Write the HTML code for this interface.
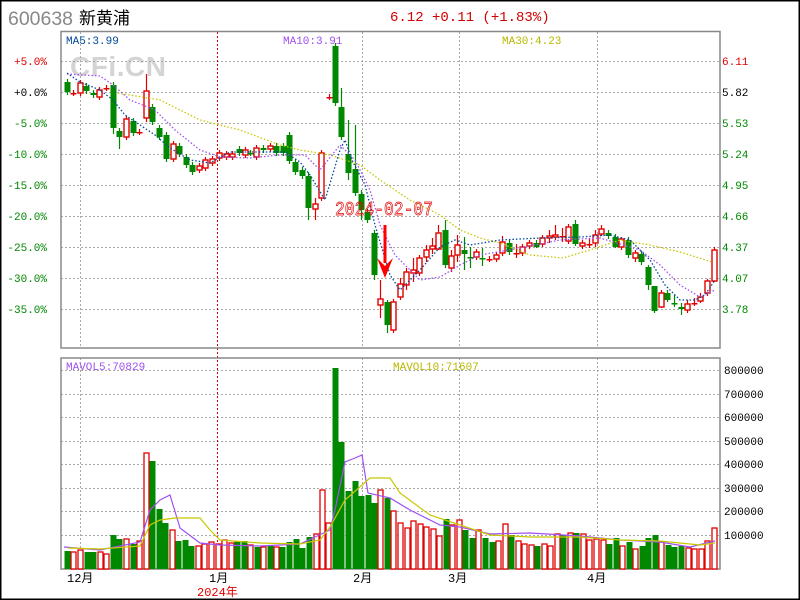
<!DOCTYPE html>
<html><head><meta charset="utf-8"><style>
html,body{margin:0;padding:0;background:#fff;}
#c{position:relative;width:800px;height:600px;overflow:hidden;}
svg text{font-family:"Liberation Mono","DejaVu Sans Mono",monospace;}
</style></head><body><div id="c">
<svg id="s" width="800" height="600" xmlns="http://www.w3.org/2000/svg">
<rect x="0.5" y="0.5" width="799" height="599" fill="#fff" stroke="#000" stroke-width="2"/>
<text x="8" y="25" font-size="19" fill="#888" textLength="65" lengthAdjust="spacingAndGlyphs" style="font-family:'Liberation Sans',sans-serif">600638</text>
<text x="79" y="24" font-size="17" fill="#000" style="font-family:'Liberation Sans','Noto Sans CJK SC',sans-serif">新黄浦</text>
<text x="390" y="21" font-size="14" fill="#d00000">6.12 +0.11 (+1.83%)</text>
<text x="70" y="76" font-weight="bold" font-size="28" fill="#d4d4d4" textLength="96" style="font-family:'Liberation Sans',sans-serif">CFi.CN</text>
<g id="grid" stroke="#aaa" stroke-width="1" stroke-dasharray="2,2"></g>
<rect x="61" y="31.5" width="659" height="316.5" fill="none" stroke="#888" stroke-width="1.5"/>
<rect x="61" y="358" width="659" height="211" fill="none" stroke="#888" stroke-width="1.5"/>
<g id="plot"></g>
<text x="66" y="44" font-size="11" fill="#004a9a">MA5:3.99</text>
<text x="283" y="44" font-size="11" fill="#a050f0">MA10:3.91</text>
<text x="502" y="44" font-size="11" fill="#b8b800">MA30:4.23</text>
<text x="66" y="370" font-size="11" fill="#a050f0">MAVOL5:70829</text>
<text x="393" y="370" font-size="11" fill="#b8b800">MAVOL10:71607</text>
<text x="335" y="215" font-size="19" fill="none" stroke="#e00000" stroke-width="0.7" textLength="98" lengthAdjust="spacingAndGlyphs">2024-02-07</text>
<g fill="#ff0000"><rect x="383.5" y="225" width="3" height="38"/><polygon points="377,258 385,278 393,258 385,266"/></g>
<g id="lab" font-size="11"></g>
<g font-size="12" fill="#000" style="font-family:'Liberation Sans','Noto Sans CJK SC',sans-serif">
<text x="67" y="582">12月</text><text x="209" y="582">1月</text><text x="353" y="582">2月</text><text x="448" y="582">3月</text><text x="587" y="582">4月</text>
<text x="197" y="596" fill="#e00000">2024年</text></g>
</svg>
<script>
var NS="http://www.w3.org/2000/svg";
function el(p,t,a,txt){var e=document.createElementNS(NS,t);for(var k in a)e.setAttribute(k,a[k]);if(txt)e.textContent=txt;p.appendChild(e);return e;}
var g=document.getElementById('grid'),P=document.getElementById('plot'),L=document.getElementById('lab');
[61,92,123,154,185,216,247,278,309].forEach(function(y){el(g,'line',{x1:61,x2:720,y1:y+.5,y2:y+.5});});
[370,394,417,441,464,488,511,535].forEach(function(y){el(g,'line',{x1:61,x2:720,y1:y+.5,y2:y+.5});});
[80,362,459,597].forEach(function(x){el(g,'line',{x1:x+.5,x2:x+.5,y1:32,y2:348});el(g,'line',{x1:x+.5,x2:x+.5,y1:358,y2:569});});
el(g,'line',{x1:217.5,x2:217.5,y1:32,y2:569,stroke:'#d00000'});
var pl=['+5.0%','+0.0%','-5.0%','-10.0%','-15.0%','-20.0%','-25.0%','-30.0%','-35.0%'],pr=['6.11','5.82','5.53','5.24','4.95','4.66','4.37','4.07','3.78'];
[61,92,123,154,185,216,247,278,309].forEach(function(y,i){var c=i==0?'#e00000':i==1?'#000':'#008800';
el(L,'text',{x:47,y:y+4,'text-anchor':'end',fill:c},pl[i]);el(L,'text',{x:722,y:y+4,fill:c},pr[i]);});
['800000','700000','600000','500000','400000','300000','200000','100000'].forEach(function(t,i){el(L,'text',{x:724,y:[370,394,417,441,464,488,511,535][i]+4,fill:'#000','font-family':'Liberation Sans, sans-serif','font-size':'11'},t);});
var C=[[67,82,92,0],[73,93,93,1],[80,83,93,1],[86,86,91,0],[93,93,95,0],[99,90,97,1],[106,88,88,1],[113,85,128,0,82,134],[119,131,137,0,128,149],[126,119,137,1],[133,121,133,0],[139,132,132,1],[146,91,118,1,74,122],[152,107,122,0],[159,128,137,0],[166,135,159,0],[173,144,159,1],[179,146,154,0],[186,157,165,0],[192,165,172,0],[199,166,170,1],[205,160,168,1],[212,159,163,1],[219,153,158,1],[226,154,157,1],[232,154,157,1],[239,149,153,0],[245,150,155,1],[250,153,153,0],[256,148,157,1],[263,148,150,0],[270,146,149,1],[276,146,153,0],[283,146,153,0],[289,135,161,0],[295,162,172,0],[302,170,176,0],[308,176,208,0,172,220],[315,204,209,1,198,220],[321,153,198,1],[329,97,97,1],[335,46,103,0],[341,107,137,0,88,140],[348,154,173,0,120,180],[355,169,193,0,125,196],[361,194,210,0,190,220],[367,212,220,0],[374,233,275,0,230,280],[380,299,305,1,280,318],[387,302,325,0,300,333],[393,302,330,1],[400,284,297,1,278,300],[406,272,285,1,268,290],[413,270,273,1,258,282],[419,258,273,1],[426,250,257,1,245,262],[432,246,249,1,238,254],[438,233,249,1,225,250],[445,230,265,0,220,268],[451,256,268,1,250,272],[457,245,255,1,235,262],[464,250,254,0,237,270],[470,257,257,0,247,268],[476,252,257,1],[482,258,258,0,248,266],[489,259,259,1],[496,255,259,1],[502,242,253,1,236,256],[509,243,252,0],[516,253,253,1,244,258],[522,247,253,1],[529,243,246,1],[536,243,247,0,240,248],[542,238,244,1],[549,236,238,1,230,243],[555,235,237,1,225,240],[562,236,236,1,228,242],[568,227,241,1],[575,224,244,0,220,246],[582,243,246,1],[589,244,244,1,238,248],[595,235,243,1,230,247],[601,229,234,1,225,236],[608,233,236,0],[615,237,247,0,234,248],[621,239,247,1,237,250],[628,240,255,0],[635,253,258,1,250,262],[641,254,262,0],[648,267,285,0,265,290],[654,286,311,0,286,313],[661,293,307,1,290,308],[667,293,300,0,290,302],[674,303,303,0,295,307],[681,307,309,0,303,315],[687,304,310,1,300,313],[694,303,303,1,298,306],[700,297,301,1,293,303],[707,281,293,1,279,296],[714,250,281,1,247,282]];
C.forEach(function(c){var x=c[0],t=c[1],b=c[2],up=c[3],col=up?'#e00000':'#008800';
var wt=c.length>4?c[4]:t-3,wb=c.length>5?c[5]:b+3;
el(P,'line',{x1:x+.5,x2:x+.5,y1:wt,y2:wb,stroke:col,'stroke-width':1.2});
if(b-t<2){el(P,'rect',{x:x-2.5,y:t,width:6,height:1.5,fill:col});}
else if(up)el(P,'rect',{x:x-2,y:t,width:5,height:b-t,fill:'#fff',stroke:col,'stroke-width':1.4});
else el(P,'rect',{x:x-2.5,y:t,width:6,height:b-t,fill:col});});
var V=[[67,551,0],[73,552,1],[80,550,1],[87,552,0],[93,552,0],[100,552,1],[106,554,1],[113,535,0],[119,539,0],[126,539,1],[133,544,0],[139,541,1],[146,453,1],[152,461,0],[159,509,0],[165,523,0],[172,530,1],[178,541,0],[185,540,0],[191,546,0],[198,546,1],[204,544,1],[211,542,1],[218,544,1],[224,540,1],[231,543,1],[237,541,0],[244,541,0],[250,545,1],[257,547,0],[263,547,1],[270,546,0],[276,547,1],[282,547,0],[289,542,0],[296,539,0],[302,548,0],[309,537,0],[316,534,1],[322,490,1],[328,523,1],[335,368,0],[341,442,0],[348,491,0],[355,481,0],[361,496,0],[368,495,0],[374,503,0],[380,490,1],[387,498,0],[393,511,1],[400,523,1],[407,528,1],[413,521,1],[420,524,1],[426,527,1],[433,529,1],[439,536,1],[446,519,0],[452,525,1],[459,520,1],[465,530,0],[472,538,0],[478,530,1],[485,538,0],[492,542,0],[498,541,1],[505,524,1],[511,535,0],[518,541,1],[524,544,1],[531,545,1],[537,546,0],[544,544,1],[550,546,1],[557,534,1],[563,535,0],[570,533,1],[576,533,0],[583,534,1],[589,540,1],[596,539,1],[603,540,1],[609,544,0],[616,538,0],[622,546,1],[629,542,0],[635,549,1],[642,546,0],[648,538,0],[655,535,0],[661,542,1],[668,545,0],[674,547,0],[681,546,0],[688,548,1],[694,549,1],[701,549,1],[707,541,1],[714,528,1]];
V.forEach(function(v){var x=v[0],t=v[1];if(v[2])el(P,'rect',{x:x-2,y:t,width:5,height:569-t,fill:'#fff',stroke:'#e00000','stroke-width':1.3});else el(P,'rect',{x:x-2.5,y:t,width:6,height:569-t,fill:'#008800'});});
function pline(pts,col,dash,w){el(P,'polyline',{points:pts,fill:'none',stroke:col,'stroke-width':w||1.3,'stroke-dasharray':dash||''});}
pline('118,93 160,100 200,120 240,130 280,145 300,150 330,155 360,165 380,180 410,200 440,215 460,230 480,238 500,243 530,255 563,258 590,250 620,240 650,245 680,252 712,262','#c8c800','1.5,2');
pline('67,74 100,76 113,85 130,100 155,110 175,130 200,150 220,157 250,158 280,155 305,155 320,170 340,145 355,160 370,190 380,225 395,255 420,280 440,277 460,265 480,255 520,248 560,240 600,238 640,250 660,265 680,285 700,297 715,290','#a050f0','1.5,2');
pline('67,73 80,82 100,90 113,100 125,115 140,125 155,135 170,148 190,160 210,163 230,152 260,152 285,152 300,162 310,175 325,200 340,150 345,140 352,160 365,185 375,225 390,275 400,290 420,270 440,247 455,240 470,245 500,240 540,238 580,237 610,235 630,240 650,260 665,285 680,300 695,300 705,295 715,280','#004a9a','1.5,2');
pline('64,547 100,550 140,542 150,510 160,500 170,495 180,528 200,543 220,545 260,546 300,544 330,530 335,510 345,462 355,458 362,455 368,493 390,498 410,510 440,525 460,527 490,534 530,533 580,536 620,540 660,542 690,547 715,541','#a050f0','',1.2);
pline('68,548 100,549 140,546 150,525 160,520 175,518 200,518 210,530 220,540 260,543 300,544 320,540 330,527 345,500 370,478 390,478 400,493 430,515 460,525 490,535 530,537 580,537 620,540 660,541 700,545 715,543','#c8c800','',1.2);
</script>
</div></body></html>
